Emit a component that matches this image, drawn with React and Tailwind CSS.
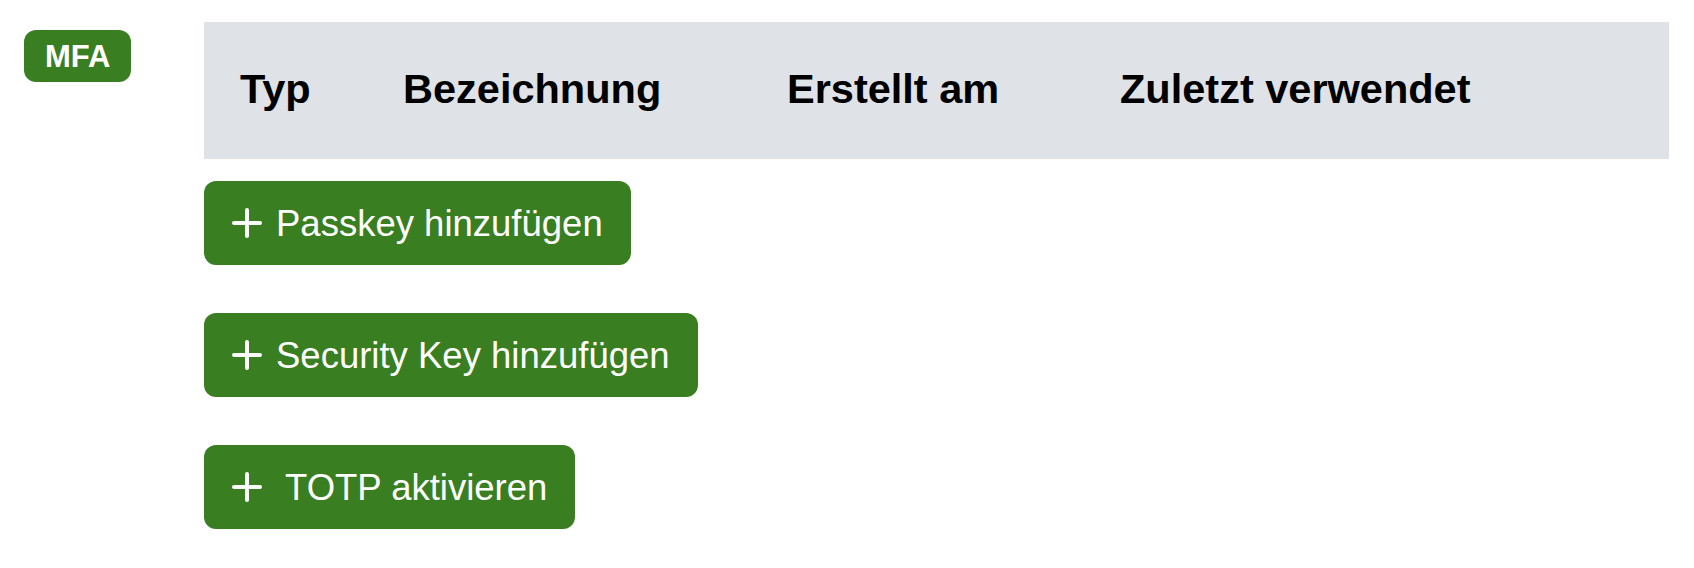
import React from 'react';

const COLUMNS = [
  { label: 'Typ', cls: 'w-[163px]' },
  { label: 'Bezeichnung', cls: 'w-[384px]' },
  { label: 'Erstellt am', cls: 'w-[333px]' },
  { label: 'Zuletzt verwendet', cls: 'flex-1' },
];

const ACTIONS = [
  { label: 'Passkey hinzufügen', textCls: 'ml-[14px]' },
  { label: 'Security Key hinzufügen', textCls: 'ml-[14px]' },
  { label: 'TOTP aktivieren', textCls: 'ml-[23px]' },
];

function PlusIcon() {
  return (
    <svg width="30" height="30" viewBox="0 0 30 30" className="shrink-0" aria-hidden="true">
      <path d="M15 2v26M2 15h26" stroke="white" strokeWidth="4" strokeLinecap="round" fill="none" />
    </svg>
  );
}

export default function App() {
  return (
    <div className="flex bg-white min-h-[568px] pt-[22px] pl-[24px] pr-[25px] font-['Liberation_Sans',Arial,sans-serif] text-black">
      {/* Section label */}
      <div className="w-[180px] shrink-0">
        <span className="mt-[8px] inline-flex h-[52px] items-center rounded-[12px] bg-[#3a7e22] px-[21px] text-[31px] font-bold text-white leading-none">
          MFA
        </span>
      </div>

      <div className="flex-1">
        {/* Table header */}
        <div className="flex h-[137px] items-center bg-[#dfe2e7]">
          {COLUMNS.map(col => (
            <div key={col.label} className={`${col.cls} pl-[36px] pb-[3px] text-[41.5px] font-bold leading-none whitespace-nowrap`}>
              {col.label}
            </div>
          ))}
        </div>

        {/* Actions */}
        <div className="mt-[22px] flex flex-col items-start gap-[48px]">
          {ACTIONS.map(a => (
            <button
              key={a.label}
              type="button"
              className="flex h-[84px] items-center rounded-[12px] bg-[#3a7e22] px-[28px] text-[36.5px] text-white leading-none"
            >
              <PlusIcon />
              <span className={`${a.textCls} pt-[2px]`}>{a.label}</span>
            </button>
          ))}
        </div>
      </div>
    </div>
  );
}
